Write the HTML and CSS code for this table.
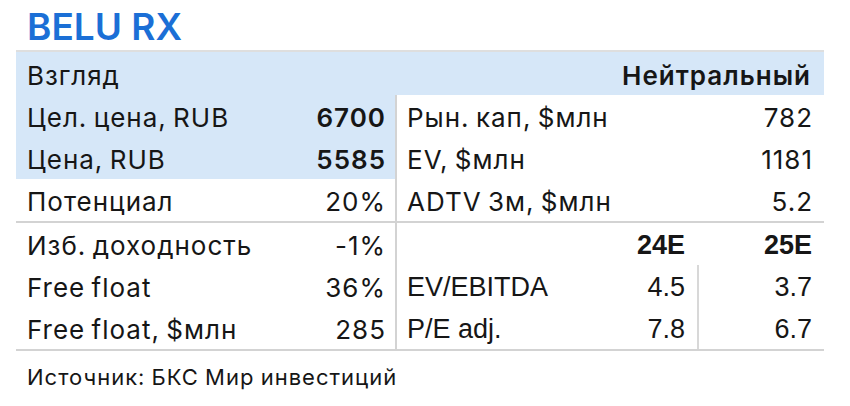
FILE: index.html
```html
<!DOCTYPE html>
<html lang="ru">
<head>
<meta charset="utf-8">
<link rel="stylesheet" href="styles.css">
</head>
<body>
<div class="page">
  <h1 class="title">BELU RX</h1>
  <div class="sheet">
    <div class="hdr">
      <span>Взгляд</span>
      <span class="b">Нейтральный</span>
    </div>
    <div class="block">
      <div class="col left">
        <div class="row blue"><span>Цел. цена, RUB</span><span class="b">6700</span></div>
        <div class="row blue"><span>Цена, RUB</span><span class="b">5585</span></div>
        <div class="row"><span>Потенциал</span><span>20%</span></div>
      </div>
      <div class="col right">
        <div class="row"><span>Рын. кап, $млн</span><span>782</span></div>
        <div class="row"><span>EV, $млн</span><span>1181</span></div>
        <div class="row"><span>ADTV 3м, $млн</span><span>5.2</span></div>
      </div>
    </div>
    <div class="line"></div>
    <div class="block">
      <div class="col left">
        <div class="row"><span>Изб. доходность</span><span>-1%</span></div>
        <div class="row"><span>Free float</span><span>36%</span></div>
        <div class="row"><span>Free float, $млн</span><span>285</span></div>
      </div>
      <div class="col right mult">
        <div class="mrow"><span class="ml"></span><span class="mv b">24E</span><span class="mv2 b">25E</span></div>
        <div class="mrow div"><span class="ml">EV/EBITDA</span><span class="mv">4.5</span><span class="mv2">3.7</span></div>
        <div class="mrow div"><span class="ml">P/E adj.</span><span class="mv">7.8</span><span class="mv2">6.7</span></div>
      </div>
    </div>
    <div class="line"></div>
  </div>
  <p class="src">Источник: БКС Мир инвестиций</p>
</div>
</body>
</html>
```
FILE: styles.css
```css
html, body {
  margin: 0;
  padding: 0;
  background: #ffffff;
}
body {
  font-family: Inter, "Noto Sans", sans-serif;
  color: #161616;
}
.page {
  width: 850px;
  height: 406px;
  padding-left: 16px;
  box-sizing: border-box;
}
.title {
  margin: 0;
  height: 50px;
  padding: 7px 0 0 11px;
  box-sizing: border-box;
  font-size: 37px;
  line-height: 40px;
  font-weight: 600;
  color: #1b6fd6;
}
.sheet {
  width: 808px;
}
.b { font-weight: 600; }
.hdr {
  height: 45px;
  border-top: 2px solid #dedede;
  box-sizing: border-box;
  background: #d6e7f8;
  display: flex;
  justify-content: space-between;
  align-items: center;
  padding: 3px 13px 0 11px;
  font-size: 26px;
  letter-spacing: 1px;
}
.block {
  display: flex;
}
.col.left {
  width: 379px;
}
.col.right {
  width: 427px;
  border-left: 2px solid #d3d3d3;
}
.row {
  height: 42px;
  box-sizing: border-box;
  padding-top: 3px;
  display: flex;
  justify-content: space-between;
  align-items: center;
  font-size: 26px;
  letter-spacing: 1px;
  word-spacing: -2px;
}
.left .row { padding-left: 11px; padding-right: 9px; }
.right .row { padding-left: 10px; padding-right: 11px; }
.row.blue { background: #d6e7f8; }
.line {
  height: 2px;
  background: #d3d3d3;
}
.mrow {
  height: 42px;
  box-sizing: border-box;
  padding-top: 3px;
  display: flex;
  align-items: center;
  font-family: "Liberation Sans", Arial, sans-serif;
  font-size: 27px;
}
.mrow .b { font-weight: 700; }
.ml {
  flex: 1;
  padding-left: 10px;
}
.mv {
  width: 100px;
  padding-right: 12px;
  align-self: stretch;
  display: flex;
  align-items: center;
  justify-content: flex-end;
}
.mv2 {
  width: 113px;
  padding-right: 12px;
  align-self: stretch;
  display: flex;
  align-items: center;
  justify-content: flex-end;
  border-left: 2px solid transparent;
}
.mrow.div .mv2 { border-left-color: #d8d8d8; }
.mrow.div { padding-top: 0; }
.mrow.div .mv, .mrow.div .mv2, .mrow.div .ml { padding-top: 3px; }
.src {
  margin: 13px 0 0 11px;
  font-size: 22px;
  line-height: 26px;
  letter-spacing: 1px;
  word-spacing: -1px;
}
```
